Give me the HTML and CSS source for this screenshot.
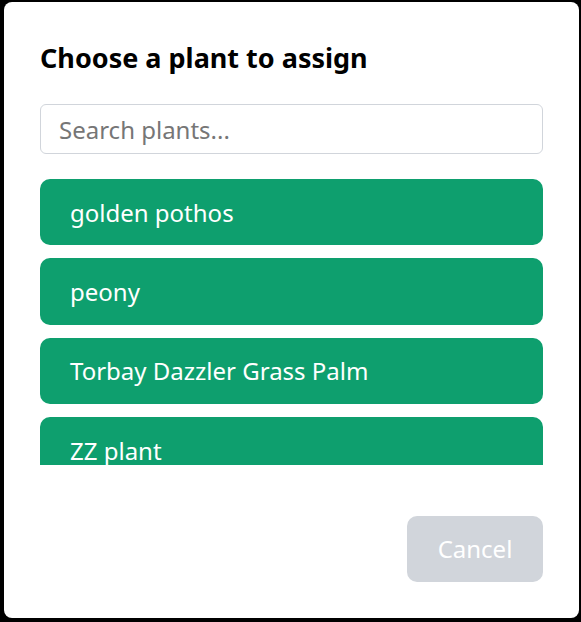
FILE: index.html
```html
<!DOCTYPE html>
<html>
<head>
<meta charset="utf-8">
<link rel="stylesheet" href="styles.css">
</head>
<body>
<div class="modal">
  <h2 class="title">Choose a plant to assign</h2>
  <input class="search" type="text" placeholder="Search plants...">
  <div class="list">
    <button class="item">golden pothos</button>
    <button class="item">peony</button>
    <button class="item">Torbay Dazzler Grass Palm</button>
    <button class="item">ZZ plant</button>
  </div>
  <div class="footer">
    <button class="cancel">Cancel</button>
  </div>
</div>
</body>
</html>
```
FILE: styles.css
```css
html, body {
  margin: 0;
  padding: 0;
  background: #000;
  height: 100%;
}
body {
  padding: 2px 2px 4px 4px;
  box-sizing: border-box;
  font-family: "Noto Sans", "Open Sans", sans-serif;
}
.modal {
  background: #fff;
  border-radius: 8px;
  height: 616px;
  width: 575px;
  box-sizing: border-box;
  padding: 38px 36px 36px 36px;
  display: flex;
  flex-direction: column;
}
.title {
  margin: 0;
  font-size: 27px;
  font-weight: 700;
  line-height: 36px;
  color: #000;
}
.search {
  margin-top: 28px;
  height: 50px;
  box-sizing: border-box;
  border: 1px solid #d1d5db;
  border-radius: 6px;
  padding: 0 18px;
  font-family: inherit;
  font-size: 24px;
  color: #111;
  outline: none;
}
.search::placeholder {
  color: #767676;
}
.list {
  margin-top: 25px;
  height: 286px;
  overflow: hidden;
  display: flex;
  flex-direction: column;
  gap: 13px;
}
.item {
  flex: none;
  height: 66.33px;
  background: #0e9f6e;
  color: #fff;
  border: none;
  border-radius: 10px;
  text-align: left;
  padding: 1px 30px 0;
  font-family: inherit;
  font-size: 24px;
  line-height: 32px;
}
.footer {
  margin-top: auto;
  display: flex;
  justify-content: flex-end;
}
.cancel {
  width: 136px;
  height: 66.33px;
  background: #d1d5db;
  color: #fff;
  border: none;
  border-radius: 10px;
  font-family: inherit;
  font-size: 24px;
}
```
